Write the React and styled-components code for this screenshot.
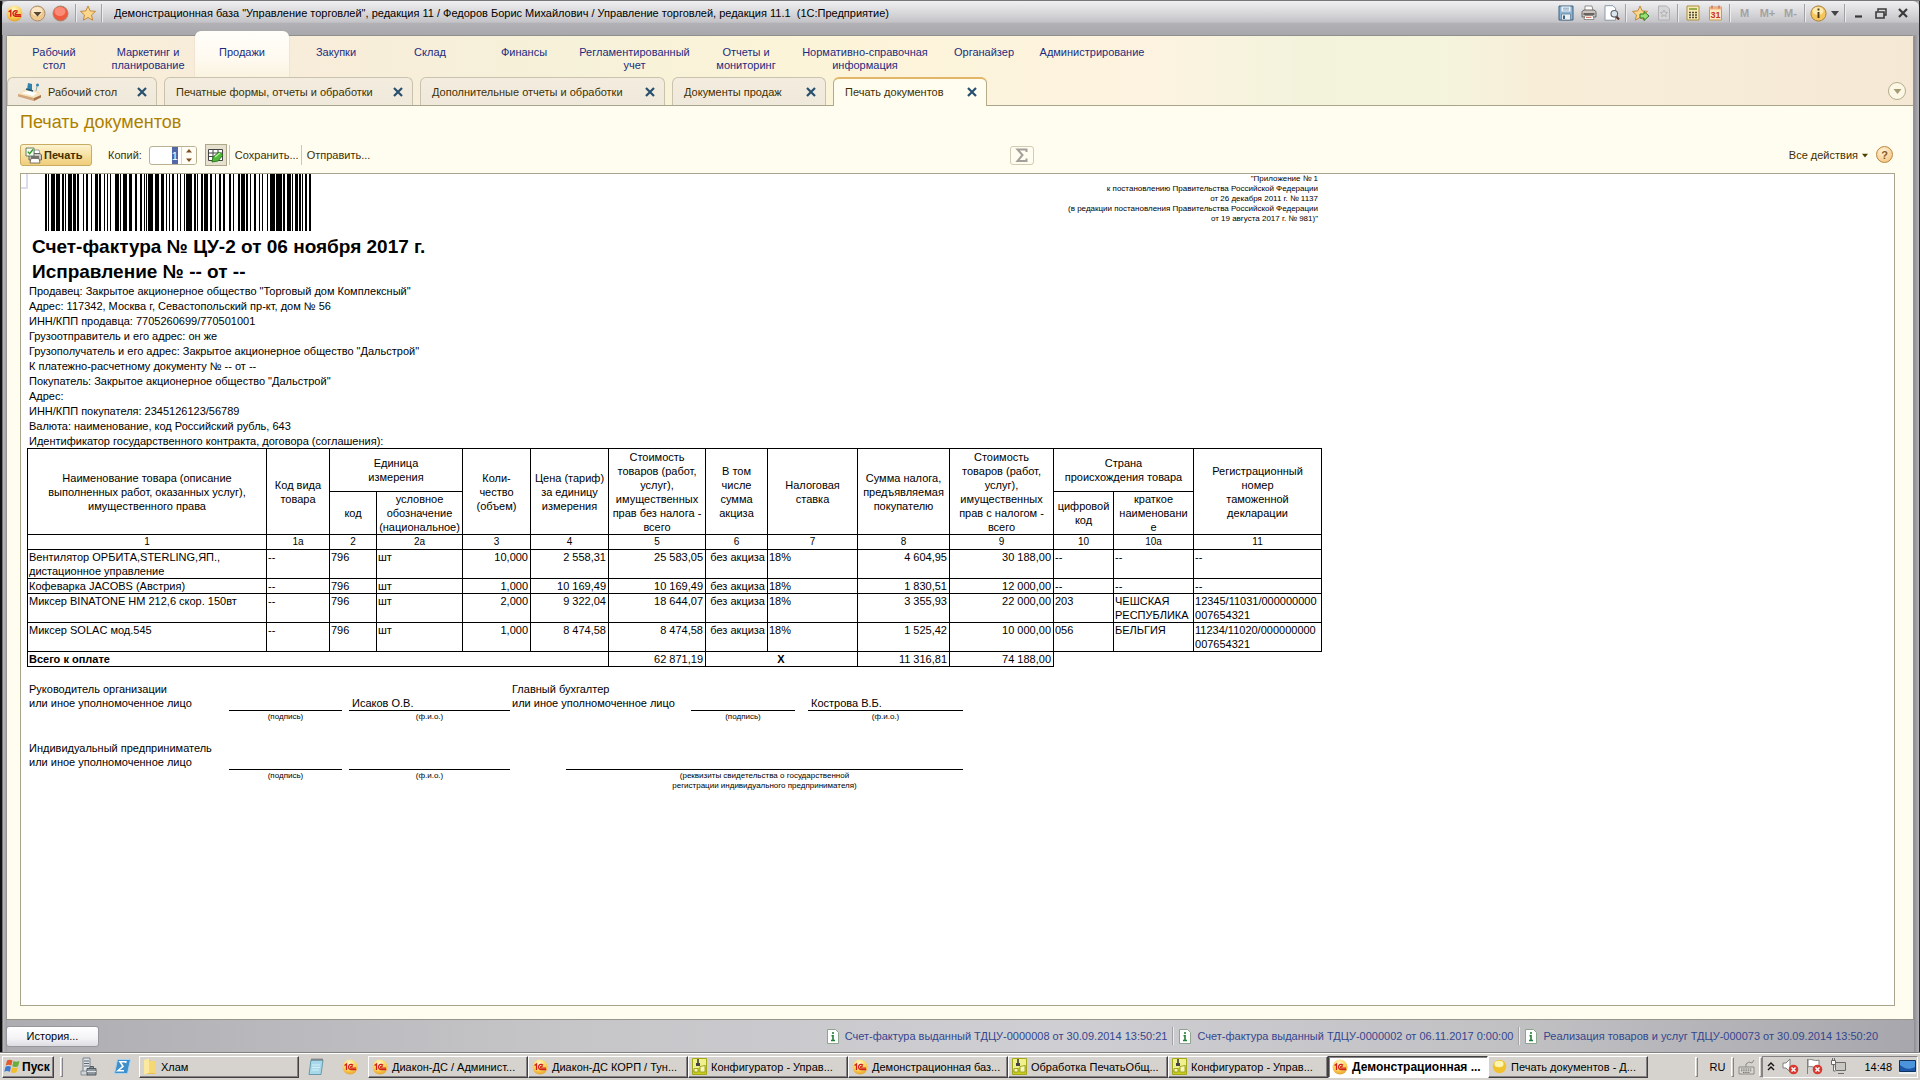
import { Fragment } from 'react';
import styled, { createGlobalStyle, css } from 'styled-components';

const GlobalStyle = createGlobalStyle`
  * {
    box-sizing: border-box;
  }
  body {
    margin: 0;
    font-family: 'Liberation Sans', Arial, sans-serif;
    font-size: 11px;
    line-height: 14px;
    color: #000;
  }
  button, input {
    font: inherit;
    color: inherit;
  }
  button {
    padding: 0;
    border: 0;
    background: none;
  }
  a {
    text-decoration: none;
  }
  svg {
    flex: none;
  }
`;

const Screen = styled.div`
  min-height: 100vh;
  display: flex;
  flex-direction: column;
  background: #d6d3ce;
`;

const AppWindow = styled.div`
  flex: 1;
  display: flex;
  flex-direction: column;
  padding: 0 6px;
  border-top: 1px solid #77777b;
  border-bottom: 1px solid #808080;
  background:
    linear-gradient(90deg, #111 0 2px, #77777b 2px 3px, #b9b9bd 3px, #9d9da2 7px, transparent 7px),
    linear-gradient(270deg, #2b2b2f 0 1px, #b4b4b8 1px, #8d8d94 6px, transparent 6px),
    linear-gradient(90deg, #adadb1, #c6c6c9 30%, #cfced2 55%, #c0c0c3 80%, #a6a6ac);
`;

/* title bar */

const TitleBar = styled.header`
  height: 34px;
  margin: 0 -5px 0 -4px;
  padding: 0 5px 10px 1px;
  display: flex;
  align-items: center;
  border-radius: 6px 6px 0 0;
  background: linear-gradient(#f0f0f2, #d8d8db 35%, #c4c4c8 62%, #b2b2b6 66%, #a8a8ac);
`;

const IconButton = styled.button`
  flex: none;
  width: ${(props) => props.$width || 23}px;
  height: 20px;
  display: flex;
  align-items: center;
  justify-content: center;
  color: ${(props) => props.$color || '#333'};
  font-weight: bold;
`;

const BarLine = styled.span`
  flex: none;
  width: 2px;
  height: 18px;
  margin: 0 ${(props) => props.$gap || 2}px;
  border-left: 1px solid #a2a2a6;
  border-right: 1px solid #ececee;
`;

const TitleText = styled.h1`
  flex: 1;
  margin: 0 8px;
  font-size: 11px;
  font-weight: normal;
  white-space: nowrap;
  overflow: hidden;
`;

/* sections and tabs */

const Workspace = styled.div`
  flex: 1;
  display: flex;
  flex-direction: column;
  background: #fffcf0;
  border: 1px solid #98968c;
  border-top-color: #8f8f8f;
  border-radius: 3px 3px 0 0;
`;

const Band = styled.div`
  border-bottom: 1px solid #a9a58c;
  background: linear-gradient(
    90deg,
    #f9f0d8,
    #f8ecda 12%,
    #f6f1d9 30%,
    #fcf4d8 42%,
    #fdf3e0 60%,
    #f3f3dc 68%,
    #f4f4dc 75%,
    #f8eed8 80%,
    #f5e9d6
  );
`;

const Sections = styled.nav`
  height: 41px;
  display: flex;
`;

const Section = styled.a`
  flex: none;
  width: ${(props) => props.$width || 94}px;
  padding: 10px 4px 0;
  color: #1c2b80;
  text-align: center;
  line-height: 13px;
  white-space: pre-line;
  ${(props) =>
    props.$active &&
    css`
      margin-top: -5px;
      padding-top: 15px;
      border-radius: 6px 6px 0 0;
      background: linear-gradient(#fffefa, #fffaf0 60%, #faf3e0);
      box-shadow: 0 0 1px #a9a58c;
    `}
`;

const Tabs = styled.div`
  height: 28px;
  display: flex;
  gap: 7px;
`;

const Tab = styled.div`
  flex: none;
  width: ${(props) => props.$width}px;
  display: flex;
  align-items: center;
  justify-content: space-between;
  padding: 0 7px 0 ${(props) => (props.$icon ? 9 : 11)}px;
  border: 1px solid #c9c3ae;
  border-bottom: 0;
  border-radius: 6px 6px 0 0;
  background: linear-gradient(#f3ecdf, #efe9dc);
  color: #3f3000;
  ${(props) =>
    props.$active &&
    css`
      margin-bottom: -1px;
      padding-bottom: 2px;
      border-color: #b5ab88;
      border-top: 2px solid #e3b566;
      background: #fffcf0;
    `}
`;

const TabLabel = styled.button`
  display: flex;
  align-items: center;
  gap: 6px;
  white-space: nowrap;
`;

const TabClose = styled.button`
  width: 14px;
  height: 14px;
  display: flex;
  align-items: center;
  justify-content: center;
`;

const CollapseButton = styled.button`
  width: 18px;
  height: 18px;
  margin: 5px 7px 0 auto;
  display: flex;
  align-items: center;
  justify-content: center;
  border: 1px solid #b3ad8a;
  border-radius: 50%;
  background: #fdf8e6;
`;

/* form */

const Form = styled.main`
  flex: 1;
  display: flex;
  flex-direction: column;
  padding: 0 18px 13px 13px;
`;

const FormTitle = styled.h2`
  margin: 0;
  padding: 6px 0 0;
  height: 38px;
  font-size: 18px;
  line-height: 20px;
  font-weight: normal;
  color: #ad8000;
`;

const Toolbar = styled.div`
  height: 29px;
  display: flex;
  align-items: flex-start;
  color: #3f3000;
  line-height: 22px;
`;

const PrintButton = styled.button`
  width: 72px;
  height: 22px;
  display: flex;
  align-items: center;
  gap: 2px;
  padding-left: 4px;
  border: 1px solid #c9ab62;
  border-radius: 3px;
  background: linear-gradient(#fdf3d0, #f6dc98 60%, #efce7c);
  font-weight: bold;
`;

const CopiesLabel = styled.label`
  margin: 0 7px 0 16px;
`;

const Spinner = styled.div`
  width: 48px;
  height: 19px;
  margin: 2px 8px 0 0;
  display: flex;
  border: 1px solid #b9b191;
  border-radius: 3px;
  background: #fff;
  overflow: hidden;
`;

const CopiesInput = styled.input`
  flex: 1;
  min-width: 0;
  padding: 0 3px;
  border: 0;
  outline: 0;
  background: none;
  text-align: right;
  &::selection {
    background: #5068a8;
    color: #fff;
  }
`;

const Steps = styled.button`
  width: 15px;
  display: flex;
  align-items: center;
  justify-content: center;
  border-left: 1px solid #ddd6b8;
  background: #fffdf4;
`;

const ToggleButton = styled.button`
  width: 22px;
  height: 22px;
  display: flex;
  align-items: center;
  justify-content: center;
  border: 1px solid #aea68a;
  background: #e6e0cf;
`;

const ToolLine = styled.span`
  width: 1px;
  height: 20px;
  margin: 1px 5px 0 2px;
  background: #cfc9ac;
`;

const TextButton = styled.button`
  height: 22px;
  display: flex;
  align-items: center;
  gap: 4px;
`;

const Spring = styled.span`
  flex: ${(props) => props.$grow || 1};
`;

const SumButton = styled.button`
  width: 24px;
  height: 19px;
  margin-top: 2px;
  display: flex;
  align-items: center;
  justify-content: center;
  border: 1px solid #d2ccb4;
  border-radius: 3px;
`;

const HelpButton = styled.button`
  width: 17px;
  height: 17px;
  margin: 2px 2px 0 8px;
  border: 1px solid #b98640;
  border-radius: 50%;
  background: radial-gradient(circle at 40% 30%, #fff4dc, #f3bd6c);
  line-height: 14px;
  font-weight: bold;
  color: #8a5a20;
`;

const Sheet = styled.section`
  flex: 1;
  padding: 0 0 20px 6px;
  border: 1px solid #a9a58c;
  background: #fff;
  overflow: hidden;
`;

/* printed document */

const Paper = styled.article`
  position: relative;
  width: 1294px;
  line-height: 14px;
`;

const CellCursor = styled.div`
  position: absolute;
  top: 0;
  left: -6px;
  width: 7px;
  height: 15px;
  border: 2px solid #dcdcec;
  border-left: 0;
  border-top: 0;
`;

const PaperTop = styled.div`
  height: 60px;
  display: flex;
  justify-content: space-between;
  padding: 0 3px 0 18px;
`;

const Decree = styled.p`
  margin: 0;
  font-size: 8px;
  line-height: 10px;
  text-align: right;
  white-space: pre-line;
`;

const DocTitle = styled.h3`
  margin: 0 0 0 5px;
  font-size: 19px;
  line-height: 25px;
`;

const Details = styled.p`
  margin: 0;
  padding: 0 0 0 2px;
  line-height: 15px;
`;

const Invoice = styled.table`
  width: 100%;
  margin-top: -1px;
  table-layout: fixed;
  border-collapse: collapse;
`;

const Row = styled.tr`
  height: ${(props) => props.$height}px;
`;

const Head = styled.th`
  padding: 0;
  border: 1px solid #000;
  font-weight: normal;
  white-space: pre-line;
  font-size: ${(props) => (props.$small ? 10 : 11)}px;
`;

const Cell = styled.td`
  padding: 0 2px 0 1px;
  border: 1px solid #000;
  vertical-align: top;
  white-space: pre-line;
  text-align: ${(props) => props.$align || 'left'};
  font-weight: ${(props) => (props.$bold ? 'bold' : 'normal')};
`;

const SignRow = styled.div`
  display: flex;
  align-items: flex-start;
  padding: ${(props) => props.$top}px 0 0 2px;
`;

const SignLabel = styled.div`
  width: ${(props) => props.$width}px;
  white-space: pre-line;
`;

const SignField = styled.div`
  width: ${(props) => props.$width}px;
  margin-right: ${(props) => props.$gap || 0}px;
  padding-top: 14px;
`;

const SignValue = styled.div`
  height: 15px;
  padding-left: 3px;
  border-bottom: 1px solid #000;
`;

const SignCaption = styled.div`
  padding-top: 1px;
  font-size: 8px;
  line-height: 10px;
  text-align: center;
  white-space: pre-line;
`;

/* status bar */

const StatusBar = styled.footer`
  height: 32px;
  display: flex;
  align-items: center;
  padding: 0 36px 0 0;
`;

const HistoryButton = styled.button`
  width: 93px;
  height: 21px;
  margin-right: auto;
  border: 1px solid #97979c;
  border-radius: 3px;
  background: linear-gradient(#fff, #f3f3f6 60%, #dcdce2);
`;

const StatusLink = styled.a`
  display: flex;
  align-items: center;
  gap: 6px;
  color: #34468f;
`;

/* taskbar */

const Taskbar = styled.footer`
  height: 27px;
  display: flex;
  align-items: center;
  padding: 1px 2px 2px;
  border-top: 1px solid #fff;
  background: #d6d3ce;
`;

const raised = css`
  border: 1px solid;
  border-color: #fff #404040 #404040 #fff;
  box-shadow: inset -1px -1px 0 #848284;
`;

const StartButton = styled.button`
  width: 52px;
  height: 22px;
  display: flex;
  align-items: center;
  gap: 1px;
  padding-left: 1px;
  font-size: 12px;
  font-weight: bold;
  ${raised}
`;

const Grip = styled.span`
  width: 3px;
  height: 20px;
  margin: 0 ${(props) => props.$after}px 0 ${(props) => props.$before}px;
  border: 1px solid;
  border-color: #fff #848284 #848284 #fff;
`;

const TaskList = styled.div`
  flex: 0 1 1280px;
  min-width: 0;
  margin-left: 1px;
  display: flex;
`;

const TaskButton = styled.button`
  flex: 0 1 160px;
  min-width: 0;
  height: 22px;
  display: flex;
  align-items: center;
  gap: 4px;
  padding: 0 3px;
  white-space: nowrap;
  overflow: hidden;
  ${raised}
  ${(props) =>
    props.$active &&
    css`
      background: #fff;
      border-color: #404040 #fff #fff #404040;
      box-shadow: inset 1px 1px 0 #848284;
      font-size: 12px;
      font-weight: bold;
    `}
`;

const QuickButton = styled.button`
  width: 34px;
  height: 22px;
  display: flex;
  align-items: center;
  justify-content: center;
`;

const Tray = styled.div`
  height: 22px;
  display: flex;
  align-items: center;
  gap: 7px;
  padding: 0 1px 0 4px;
  border: 1px solid;
  border-color: #848284 #fff #fff #848284;
  font-size: 11px;
`;

const LangButton = styled.button`
  width: 28px;
  font-size: 11px;
`;

const Clock = styled.time`
  padding-left: 10px;
`;

/* icons */

const OneCIcon = ({ size = 16 }) => (
  <svg width={size} height={size} viewBox="0 0 16 16">
    <defs>
      <radialGradient id="onec" cx="45%" cy="25%" r="80%">
        <stop offset="0" stopColor="#fff6c8" />
        <stop offset=".6" stopColor="#fbcf52" />
        <stop offset="1" stopColor="#e39a2c" />
      </radialGradient>
    </defs>
    <circle cx="8" cy="8" r="7.5" fill="url(#onec)" />
    <path d="M2.500 6.500 4.500 5v6M11 6.200A2.600 2.600 0 1 0 9 10.600h5.200M10.600 7.600A1.100 1.100 0 1 0 9 9.100h5" fill="none" stroke="#d3201c" strokeWidth="1.300" />
  </svg>
);

const BallIcon = ({ light, dark, arrow }) => (
  <svg width="17" height="17" viewBox="0 0 17 17">
    <circle cx="8.5" cy="8.5" r="7.5" fill={dark} stroke="#a98a6c" />
    <ellipse cx="8" cy="6.5" rx="5.5" ry="4.6" fill={light} opacity=".75" />
    {arrow && <path d="M4.5 7h8l-4 4.5z" fill="#5a4630" />}
  </svg>
);

const StarIcon = ({ arrow }) => (
  <svg width="18" height="17" viewBox="0 0 18 17">
    <path d="m8 1 2.2 4.9 5.3.5-4 3.6 1.2 5.2L8 12.5l-4.7 2.7L4.5 10l-4-3.6 5.3-.5z" fill="#fbd78c" stroke="#c58a3c" />
    {arrow && <path d="M8 9h4V6.5l5 4.5-5 4.5V13H8z" fill="#9be070" stroke="#2c7a22" />}
  </svg>
);

const SaveIcon = () => (
  <svg width="16" height="16" viewBox="0 0 16 16">
    <path d="M1 1h14v14H1z" fill="#8db4d2" stroke="#3f617c" />
    <path d="M3.5 1.5h9v5h-9z" fill="#eef5fa" />
    <path d="M5 3.2h6M5 5h6" stroke="#8aa3b6" />
    <path d="M3.5 9h9v6h-9z" fill="#e9eff3" stroke="#56748b" strokeWidth=".7" />
    <path d="M5 10.5h2V14H5z" fill="#3f617c" />
  </svg>
);

const PrinterIcon = () => (
  <svg width="16" height="16" viewBox="0 0 16 16">
    <path d="M4 1h7l1 5H4z" fill="#fff" stroke="#777" strokeWidth=".8" />
    <path d="M1 6.5 3 5h10l2 1.5V12H1z" fill="#c9c5c2" stroke="#655e5a" strokeWidth=".9" />
    <path d="M2.5 8h11v2h-11z" fill="#6b625e" />
    <path d="M4 10.5h8l1 4H3z" fill="#fff" stroke="#777" strokeWidth=".8" />
    <path d="M5 12.3h5.5" stroke="#d35a3c" />
  </svg>
);

const PreviewIcon = () => (
  <svg width="16" height="16" viewBox="0 0 16 16">
    <path d="M1 .7h8l2.5 2.5v12H1z" fill="#fff" stroke="#7d90a3" strokeWidth=".9" />
    <path d="m12.3 11.5 2.7 3" stroke="#5e3425" strokeWidth="2.2" />
    <circle cx="10.3" cy="8.8" r="3.3" fill="#dbe7ee" stroke="#59636b" strokeWidth="1.1" />
  </svg>
);

const FavoritesIcon = () => (
  <svg width="14" height="16" viewBox="0 0 14 16">
    <path d="M1.5 1h8l3 3v11h-11z" fill="#d6d6d9" stroke="#b0b0b4" />
    <path d="m7 5 1.1 2.3 2.4.2-1.8 1.7.5 2.5L7 10.4l-2.2 1.3.5-2.5-1.8-1.7 2.4-.2z" fill="none" stroke="#aaa" strokeWidth=".8" />
  </svg>
);

const CalcIcon = () => (
  <svg width="14" height="16" viewBox="0 0 14 16">
    <path d="M1 1h12v14H1z" fill="#f8e9b4" stroke="#a98e3e" />
    <path d="M3 3h8v2H3z" fill="#9aae4c" />
    <path d="M3 7.5h8M3 10h8M3 12.5h8" stroke="#4d4a3a" strokeWidth="1.5" strokeDasharray="2 1" />
  </svg>
);

const CalendarIcon = () => (
  <svg width="15" height="16" viewBox="0 0 15 16">
    <path d="M1.5 2h12v13h-12z" fill="#fdeac4" stroke="#c79a55" />
    <path d="M1.5 2h12v2.5h-12z" fill="#f3b27c" />
    <path d="M4 .5v3M11 .5v3" stroke="#b56" />
    <text x="7.5" y="13" textAnchor="middle" fontSize="9" fontWeight="bold" fill="#c7381f">31</text>
  </svg>
);

const InfoBall = () => (
  <svg width="17" height="17" viewBox="0 0 17 17">
    <circle cx="8.5" cy="8.5" r="7.6" fill="#f6c65c" stroke="#a9803c" />
    <ellipse cx="8" cy="6" rx="5.5" ry="4" fill="#fff2c4" opacity=".8" />
    <path d="M8.5 3.6v2M8.5 7v6" stroke="#4d3a1c" strokeWidth="1.9" />
  </svg>
);

const CaretIcon = ({ color = '#4c4300', width = 7 }) => (
  <svg width={width} height="5" viewBox="0 0 8 5">
    <path d="M0 0h8L4 5z" fill={color} />
  </svg>
);

const CrossIcon = ({ color = '#28506e' }) => (
  <svg width="10" height="10" viewBox="0 0 10 10">
    <path d="m1 1 8 8M9 1 1 9" stroke={color} strokeWidth="2.2" />
  </svg>
);

const MinimizeIcon = () => (
  <svg width="12" height="12" viewBox="0 0 12 12">
    <path d="M2 9.5h7" stroke="#3a3a3a" strokeWidth="2.2" />
  </svg>
);

const RestoreIcon = () => (
  <svg width="12" height="11" viewBox="0 0 12 11">
    <path d="M3 3.5V1h8v6H9" fill="none" stroke="#3a3a3a" strokeWidth="1.5" />
    <path d="M1 4h8v6H1z" fill="none" stroke="#3a3a3a" strokeWidth="1.6" />
  </svg>
);

const DeskIcon = () => (
  <svg width="25" height="20" viewBox="0 0 25 20">
    <path d="m1 12 7-5 14 2 2 5-7 4z" fill="#f6e3bd" />
    <path d="m1 12 16 4v3L1 14.500z" fill="#d3a57c" />
    <path d="m17 16 7-3v2.500l-7 3.500z" fill="#a8754c" />
    <path d="m4 11 7-2 9 2-4 3z" fill="#fff" />
    <path d="m11 1 4 1v7l-5-1z" fill="#2f82ac" />
    <path d="m9 7 7 2" stroke="#1d5674" strokeWidth="1.500" />
    <circle cx="20.500" cy="3" r="1.500" fill="#2f82ac" />
    <path d="m20 4-1 5" stroke="#8aa" />
  </svg>
);

const PrintFormIcon = () => (
  <svg width="17" height="17" viewBox="0 0 17 17">
    <path d="M9 3h5l1 4H9z" fill="#fff" stroke="#888" strokeWidth=".8" />
    <path d="M4 8 6 6.500h9l1.500 1.500v5H4z" fill="#c8c4c0" stroke="#5f5954" strokeWidth=".9" />
    <path d="M6 11.500h8l1 4.500H5z" fill="#fff" stroke="#5f5954" strokeWidth=".8" />
    <path d="M6 10h8" stroke="#555" strokeWidth="1.500" />
    <path d="M1 1h8v8H1z" fill="#f5fbef" stroke="#57735b" strokeWidth=".9" />
    <path d="m2.800 4.600 1.800 2L8 2.500" fill="none" stroke="#2c962c" strokeWidth="1.400" />
  </svg>
);

const EditTableIcon = () => (
  <svg width="17" height="17" viewBox="0 0 17 17">
    <path d="M1.500 2.500h14v11h-14z" fill="#fff" stroke="#444" />
    <path d="M1.500 6h14M1.500 9.500h14M6 2.500v11M11 2.500v11" stroke="#444" />
    <path d="m5 15 1-5 6-5 4 3-5 6z" fill="#52b83c" stroke="#25771a" strokeWidth=".9" />
    <path d="m8 10 5-4" stroke="#b5ec98" strokeWidth="1.400" />
  </svg>
);

const StepsIcon = () => (
  <svg width="6" height="13" viewBox="0 0 6 13">
    <path d="M0 3.500 3 0l3 3.500zM0 9.500h6L3 13z" fill="#7d4f24" />
  </svg>
);

const SigmaIcon = () => (
  <svg width="13" height="15" viewBox="0 0 13 15">
    <path d="M11.500 4V1.500h-9L7.500 7l-5 6h9V10.500" fill="none" stroke="#a3a09a" strokeWidth="2" />
  </svg>
);

const NoteIcon = () => (
  <svg width="12" height="15" viewBox="0 0 12 15">
    <path d="M.5.5h8l3 3v11H.5z" fill="#fff" stroke="#8da58f" />
    <path d="M6 3v2M4.500 6.800H6v4.500M4 11.500h4" fill="none" stroke="#22803a" strokeWidth="1.600" />
  </svg>
);

const WindowsIcon = () => (
  <svg width="17" height="17" viewBox="0 0 17 17">
    <path d="M3 2.500c2-1 3.500-1 5.500 0L7.300 7.600c-2-1-3.600-1-5.500 0z" fill="#e2592b" />
    <path d="M9.500 3c2 1 3.700 1 6 0l-1.400 5.200c-2 1-3.800 1-5.800 0z" fill="#69ad3a" />
    <path d="M1.500 8.800c2-1 3.600-1 5.500 0l-1.200 5c-2-1-3.600-1-5.500 0z" fill="#3d79cf" />
    <path d="M8 9.200c2 1 3.700 1 5.800 0l-1.300 5.100c-2 1-3.800 1-5.800 0z" fill="#f3bd2c" />
  </svg>
);

const ServerIcon = () => (
  <svg width="17" height="19" viewBox="0 0 17 19">
    <path d="M3 1h7v15H3z" fill="#dfe4e8" stroke="#76828c" />
    <path d="M4 4h5M4 6.500h5M4 9h5" stroke="#5d6973" />
    <path d="M1 14h7v4H1z" fill="#cfd4d8" stroke="#76828c" strokeWidth=".8" />
    <path d="M7 11.500h9V18H7zM10 11.500v-2h3.500v2" fill="#8f999f" stroke="#525c63" />
    <path d="M7 14.500h9" stroke="#dfe4e8" />
  </svg>
);

const ShellIcon = () => (
  <svg width="17" height="17" viewBox="0 0 17 17">
    <path d="M3.500 1.500h13L13.500 15.500H.5z" fill="#3f8fcb" stroke="#a6d2ef" />
    <path d="m11.500 5 .3-1.200H6L9 8.300l-5 4.400h6" fill="none" stroke="#fff" strokeWidth="1.600" />
  </svg>
);

const FolderIcon = () => (
  <svg width="14" height="17" viewBox="0 0 14 17">
    <path d="M1 2h5l2 1h4v13H1z" fill="#e6bf4e" />
    <path d="m1 2 5-1.500V15l-5 1.500z" fill="#fbe9a0" />
    <path d="M6 3h6v12H6z" fill="#f5d775" />
  </svg>
);

const NotepadIcon = () => (
  <svg width="16" height="18" viewBox="0 0 16 18">
    <path d="M3 2h12l-2 14.500H1z" fill="#a7d9ea" stroke="#5b93a6" strokeWidth=".9" />
    <path d="M4 7h8M4 9.500h8M3.500 12H11" stroke="#d6f0f7" />
    <path d="M3.500 1.500h11" stroke="#555" strokeWidth="2" strokeDasharray="1 1" />
  </svg>
);

const ConfigIcon = () => (
  <svg width="15" height="17" viewBox="0 0 15 17">
    <path d="M.5.5h14v16H.5z" fill="#c9cd1f" stroke="#a3a81a" />
    <path d="M1 1h13v6L1 12z" fill="#f0f08c" />
    <path d="M6 1v4" stroke="#333" strokeWidth="1.500" />
    <path d="M4 5h4v3H4z" fill="#444" />
    <path d="M2 14v-3.500h4V14zM8 14V8.500l5-1V14z" fill="#f6f7b4" stroke="#8f9413" strokeWidth=".8" />
  </svg>
);

const YellowBallIcon = () => (
  <svg width="15" height="15" viewBox="0 0 15 15">
    <circle cx="7.500" cy="7.500" r="6.800" fill="#f2c22e" />
    <ellipse cx="7" cy="5" rx="4.500" ry="3.300" fill="#fff6b0" />
  </svg>
);

const KeyboardIcon = () => (
  <svg width="17" height="16" viewBox="0 0 17 16">
    <path d="M1 8h15v7H1z" fill="#dad8d2" stroke="#8b8983" />
    <path d="M3 10h11M3 11.800h11M5 13.500h7" stroke="#77756f" strokeDasharray="1.500 .7" />
    <path d="M8 8V5l3-2 3 1 2-3" fill="none" stroke="#8b8983" />
  </svg>
);

const ChevronsIcon = () => (
  <svg width="8" height="9" viewBox="0 0 8 9">
    <path d="m1 4 3-3 3 3M1 8l3-3 3 3" fill="none" stroke="#111" strokeWidth="1.400" />
  </svg>
);

const SoundIcon = () => (
  <svg width="17" height="17" viewBox="0 0 17 17">
    <path d="M1 5h3l4-4v13l-4-4H1z" fill="#fff" stroke="#808080" />
    <circle cx="11.500" cy="11.500" r="4.800" fill="#d93a30" />
    <path d="m9.500 9.500 4 4M13.500 9.500l-4 4" stroke="#fff" strokeWidth="1.500" />
  </svg>
);

const FlagIcon = () => (
  <svg width="17" height="17" viewBox="0 0 17 17">
    <path d="M1.500 1v15M2 2c4-2 6 2 11 0v7c-5 2-7-2-11 0z" fill="#fff" stroke="#808080" />
    <circle cx="11.500" cy="11.500" r="4.800" fill="#d93a30" />
    <path d="m9.500 9.500 4 4M13.500 9.500l-4 4" stroke="#fff" strokeWidth="1.500" />
  </svg>
);

const NetworkIcon = () => (
  <svg width="17" height="17" viewBox="0 0 17 17">
    <path d="M5.500 4.500h10v8h-10zM8 15.500h6" fill="#c9c7c2" stroke="#6b6b6b" />
    <path d="M1.500 2.500h4v4h-4zM2.500 0v2.500M4.500 0v2.500M3.500 6.500V13h2" fill="#fff" stroke="#6b6b6b" />
  </svg>
);

const DesktopIcon = () => (
  <svg width="17" height="14" viewBox="0 0 17 14">
    <path d="M.5.5h16v11H.5z" fill="#1d58a8" stroke="#0f315e" />
    <path d="M1 11V5c5 4 9 5 15 2V1H1z" fill="#4c94dc" />
    <path d="M0 13h17" stroke="#e9eef3" strokeWidth="2" />
  </svg>
);

// bar and space widths in turn, starting with a bar
const barcodeWidths = [
  2, 1, 1, 2, 4, 1, 4, 2, 2, 1, 1, 2, 4, 1, 3, 1, 1, 1, 1, 4, 1, 2, 2, 3, 1, 3, 3, 1, 2, 3, 1, 2,
  1, 2, 1, 4, 4, 1, 1, 2, 4, 2, 3, 3, 2, 3, 2, 2, 1, 2, 1, 1, 5, 2, 4, 2, 3, 2, 1, 2, 1, 2, 2, 3,
  1, 2, 1, 3, 1, 1, 6, 2, 2, 1, 1, 3, 2, 1, 4, 2, 3, 3, 1, 3, 2, 2, 2, 4, 2, 2, 1, 4, 2, 1, 4, 1,
  2, 2, 1, 3, 2, 3, 1, 2, 1, 4, 1, 2, 5, 1, 2, 1, 4, 1, 2, 2, 4, 1, 1, 2, 3, 1, 2, 1, 1, 2, 2, 2, 2,
];

const Barcode = () => {
  let x = 0;
  const bars = [];
  barcodeWidths.forEach((width, i) => {
    if (i % 2 === 0) bars.push(<rect key={i} x={x} y="0" width={width} height="57" />);
    x += width;
  });
  return (
    <svg width="266" height="57" viewBox={`0 0 ${x} 57`} preserveAspectRatio="none" shapeRendering="crispEdges">
      {bars}
    </svg>
  );
};

const sections = [
  { label: 'Рабочий\nстол' },
  { label: 'Маркетинг и\nпланирование' },
  { label: 'Продажи', active: true },
  { label: 'Закупки' },
  { label: 'Склад' },
  { label: 'Финансы' },
  { label: 'Регламентированный\nучет', width: 127 },
  { label: 'Отчеты и\nмониторинг', width: 96 },
  { label: 'Нормативно-справочная\nинформация', width: 142 },
  { label: 'Органайзер', width: 96 },
  { label: 'Администрирование', width: 120 },
];

const tabs = [
  { label: 'Рабочий стол', width: 150, icon: <DeskIcon /> },
  { label: 'Печатные формы, отчеты и обработки', width: 249 },
  { label: 'Дополнительные отчеты и обработки', width: 245 },
  { label: 'Документы продаж', width: 154 },
  { label: 'Печать документов', width: 154, active: true },
];

const details = [
  'Продавец: Закрытое акционерное общество "Торговый дом Комплексный"',
  'Адрес: 117342, Москва г, Севастопольский пр-кт, дом № 56',
  'ИНН/КПП продавца: 7705260699/770501001',
  'Грузоотправитель и его адрес: он же',
  'Грузополучатель и его адрес: Закрытое акционерное общество "Дальстрой"',
  'К платежно-расчетному документу № -- от --',
  'Покупатель: Закрытое акционерное общество "Дальстрой"',
  'Адрес:',
  'ИНН/КПП покупателя: 2345126123/56789',
  'Валюта: наименование, код Российский рубль, 643',
  'Идентификатор государственного контракта, договора (соглашения):',
];

const columns = [
  { width: 239, number: '1' },
  { width: 63, number: '1а' },
  { width: 47, number: '2' },
  { width: 86, number: '2а' },
  { width: 68, number: '3', align: 'right' },
  { width: 78, number: '4', align: 'right' },
  { width: 97, number: '5', align: 'right' },
  { width: 62, number: '6', align: 'right' },
  { width: 90, number: '7' },
  { width: 92, number: '8', align: 'right' },
  { width: 104, number: '9', align: 'right' },
  { width: 60, number: '10' },
  { width: 80, number: '10а' },
  { width: 128, number: '11' },
];

const goods = [
  {
    height: 29,
    cells: ['Вентилятор ОРБИТА,STERLING,ЯП.,\nдистационное управление', '--', '796', 'шт', '10,000', '2 558,31', '25 583,05', 'без акциза', '18%', '4 604,95', '30 188,00', '--', '--', '--'],
  },
  {
    height: 15,
    cells: ['Кофеварка JACOBS (Австрия)', '--', '796', 'шт', '1,000', '10 169,49', '10 169,49', 'без акциза', '18%', '1 830,51', '12 000,00', '--', '--', '--'],
  },
  {
    height: 29,
    cells: ['Миксер BINATONE HM 212,6 скор. 150вт', '--', '796', 'шт', '2,000', '9 322,04', '18 644,07', 'без акциза', '18%', '3 355,93', '22 000,00', '203', 'ЧЕШСКАЯ\nРЕСПУБЛИКА', '12345/11031/000000000\n007654321'],
  },
  {
    height: 29,
    cells: ['Миксер SOLAC мод.545', '--', '796', 'шт', '1,000', '8 474,58', '8 474,58', 'без акциза', '18%', '1 525,42', '10 000,00', '056', 'БЕЛЬГИЯ', '11234/11020/000000000\n007654321'],
  },
];

const messages = [
  'Счет-фактура выданный ТДЦУ-0000008 от 30.09.2014 13:50:21',
  'Счет-фактура выданный ТДЦУ-0000002 от 06.11.2017 0:00:00',
  'Реализация товаров и услуг ТДЦУ-000073 от 30.09.2014 13:50:20',
];

const tasks = [
  { label: 'Диакон-ДС / Админист...', icon: <OneCIcon /> },
  { label: 'Диакон-ДС КОРП / Тун...', icon: <OneCIcon /> },
  { label: 'Конфигуратор - Управ...', icon: <ConfigIcon /> },
  { label: 'Демонстрационная баз...', icon: <OneCIcon /> },
  { label: 'Обработка ПечатьОбщ...', icon: <ConfigIcon /> },
  { label: 'Конфигуратор - Управ...', icon: <ConfigIcon /> },
  { label: 'Демонстрационная ...', icon: <OneCIcon />, active: true },
  { label: 'Печать документов - Д...', icon: <YellowBallIcon /> },
];

const Signature = ({ width, gap, value, caption }) => (
  <SignField $width={width} $gap={gap}>
    <SignValue>{value}</SignValue>
    <SignCaption>{caption}</SignCaption>
  </SignField>
);

const InvoiceTable = () => (
  <Invoice>
    <colgroup>
      {columns.map((column) => (
        <col key={column.number} width={column.width} />
      ))}
    </colgroup>
    <thead>
      <Row $height={43}>
        <Head rowSpan={2}>{'Наименование товара (описание\nвыполненных работ, оказанных услуг),\nимущественного права'}</Head>
        <Head rowSpan={2}>{'Код вида\nтовара'}</Head>
        <Head colSpan={2}>{'Единица\nизмерения'}</Head>
        <Head rowSpan={2}>{'Коли-\nчество\n(объем)'}</Head>
        <Head rowSpan={2}>{'Цена (тариф)\nза единицу\nизмерения'}</Head>
        <Head rowSpan={2}>{'Стоимость\nтоваров (работ,\nуслуг),\nимущественных\nправ без налога -\nвсего'}</Head>
        <Head rowSpan={2}>{'В том\nчисле\nсумма\nакциза'}</Head>
        <Head rowSpan={2}>{'Налоговая\nставка'}</Head>
        <Head rowSpan={2}>{'Сумма налога,\nпредъявляемая\nпокупателю'}</Head>
        <Head rowSpan={2}>{'Стоимость\nтоваров (работ,\nуслуг),\nимущественных\nправ с налогом -\nвсего'}</Head>
        <Head colSpan={2}>{'Страна\nпроисхождения товара'}</Head>
        <Head rowSpan={2}>{'Регистрационный\nномер\nтаможенной\nдекларации'}</Head>
      </Row>
      <Row $height={43}>
        <Head>код</Head>
        <Head>{'условное\nобозначение\n(национальное)'}</Head>
        <Head>{'цифровой\nкод'}</Head>
        <Head>{'краткое\nнаименовани\nе'}</Head>
      </Row>
      <Row $height={15}>
        {columns.map((column) => (
          <Head key={column.number} $small>
            {column.number}
          </Head>
        ))}
      </Row>
    </thead>
    <tbody>
      {goods.map((row) => (
        <Row key={row.cells[0]} $height={row.height}>
          {row.cells.map((cell, i) => (
            <Cell key={columns[i].number} $align={columns[i].align}>
              {cell}
            </Cell>
          ))}
        </Row>
      ))}
      <Row $height={15}>
        <Cell colSpan={6} $bold>
          Всего к оплате
        </Cell>
        <Cell $align="right">62 871,19</Cell>
        <Cell colSpan={2} $align="center" $bold>
          X
        </Cell>
        <Cell $align="right">11 316,81</Cell>
        <Cell $align="right">74 188,00</Cell>
      </Row>
    </tbody>
  </Invoice>
);

const InvoicePaper = () => (
  <Paper>
    <CellCursor />
    <PaperTop>
      <Barcode />
      <Decree>
        {'"Приложение № 1\nк постановлению Правительства Российской Федерации\nот 26 декабря 2011 г. № 1137\n(в редакции постановления Правительства Российской Федерации\nот 19 августа 2017 г. № 981)"'}
      </Decree>
    </PaperTop>
    <DocTitle>
      Счет-фактура № ЦУ-2 от 06 ноября 2017 г.
      <br />
      Исправление № -- от --
    </DocTitle>
    {details.map((line, i) => (
      <Details key={i}>{line}</Details>
    ))}
    <InvoiceTable />
    <SignRow $top={15}>
      <SignLabel $width={200}>{'Руководитель организации\nили иное уполномоченное лицо'}</SignLabel>
      <Signature width={113} gap={7} caption="(подпись)" />
      <Signature width={161} gap={2} value="Исаков О.В." caption="(ф.и.о.)" />
      <SignLabel $width={179}>{'Главный бухгалтер\nили иное уполномоченное лицо'}</SignLabel>
      <Signature width={104} gap={13} caption="(подпись)" />
      <Signature width={155} value="Кострова В.Б." caption="(ф.и.о.)" />
    </SignRow>
    <SignRow $top={19}>
      <SignLabel $width={200}>{'Индивидуальный предприниматель\nили иное уполномоченное лицо'}</SignLabel>
      <Signature width={113} gap={7} caption="(подпись)" />
      <Signature width={161} gap={56} caption="(ф.и.о.)" />
      <Signature
        width={397}
        caption={'(реквизиты свидетельства о государственной\nрегистрации индивидуального предпринимателя)'}
      />
    </SignRow>
  </Paper>
);

const App = () => (
  <Screen>
    <GlobalStyle />
    <AppWindow>
      <TitleBar>
        <IconButton aria-label="Меню"><OneCIcon size={17} /></IconButton>
        <IconButton aria-label="Главное меню"><BallIcon light="#fdf0d8" dark="#eec88c" arrow /></IconButton>
        <IconButton aria-label="Стоп"><BallIcon light="#ff9c88" dark="#ee5a40" /></IconButton>
        <BarLine $gap={3} />
        <IconButton $width={18} aria-label="Избранное"><StarIcon /></IconButton>
        <BarLine $gap={3} />
        <TitleText>
          Демонстрационная база "Управление торговлей", редакция 11 / Федоров Борис Михайлович / Управление торговлей,
          редакция 11.1&nbsp; (1С:Предприятие)
        </TitleText>
        <IconButton aria-label="Сохранить"><SaveIcon /></IconButton>
        <IconButton aria-label="Печать"><PrinterIcon /></IconButton>
        <IconButton aria-label="Просмотр"><PreviewIcon /></IconButton>
        <BarLine />
        <IconButton aria-label="В избранное"><StarIcon arrow /></IconButton>
        <IconButton aria-label="Ссылка"><FavoritesIcon /></IconButton>
        <BarLine />
        <IconButton aria-label="Калькулятор"><CalcIcon /></IconButton>
        <IconButton aria-label="Календарь"><CalendarIcon /></IconButton>
        <BarLine />
        <IconButton $color="#a5a1a1">M</IconButton>
        <IconButton $color="#a5a1a1">M+</IconButton>
        <IconButton $color="#a5a1a1">M-</IconButton>
        <BarLine />
        <IconButton $width={20} aria-label="Справка"><InfoBall /></IconButton>
        <IconButton $width={14} aria-label="Еще"><CaretIcon color="#444" width={8} /></IconButton>
        <BarLine />
        <IconButton $width={22} aria-label="Свернуть"><MinimizeIcon /></IconButton>
        <IconButton $width={22} aria-label="Восстановить"><RestoreIcon /></IconButton>
        <IconButton $width={22} aria-label="Закрыть"><CrossIcon color="#3a3a3a" /></IconButton>
      </TitleBar>

      <Workspace>
        <Band>
          <Sections>
            {sections.map((section) => (
              <Section key={section.label} href="#" $width={section.width} $active={section.active}>
                {section.label}
              </Section>
            ))}
          </Sections>
          <Tabs>
            {tabs.map((tab) => (
              <Tab key={tab.label} $width={tab.width} $active={tab.active} $icon={!!tab.icon}>
                <TabLabel>
                  {tab.icon}
                  {tab.label}
                </TabLabel>
                <TabClose aria-label="Закрыть">
                  <CrossIcon />
                </TabClose>
              </Tab>
            ))}
            <CollapseButton aria-label="Список окон">
              <CaretIcon color="#a39c74" width={9} />
            </CollapseButton>
          </Tabs>
        </Band>

        <Form>
          <FormTitle>Печать документов</FormTitle>
          <Toolbar>
            <PrintButton>
              <PrintFormIcon />
              Печать
            </PrintButton>
            <CopiesLabel htmlFor="copies">Копий:</CopiesLabel>
            <Spinner>
              <CopiesInput id="copies" defaultValue="1" autoFocus onFocus={(e) => e.target.select()} />
              <Steps aria-label="Изменить">
                <StepsIcon />
              </Steps>
            </Spinner>
            <ToggleButton aria-label="Редактирование">
              <EditTableIcon />
            </ToggleButton>
            <ToolLine />
            <TextButton>Сохранить...</TextButton>
            <ToolLine />
            <TextButton>Отправить...</TextButton>
            <Spring $grow={11} />
            <SumButton aria-label="Сумма">
              <SigmaIcon />
            </SumButton>
            <Spring $grow={13} />
            <TextButton>
              Все действия
              <CaretIcon width={6} />
            </TextButton>
            <HelpButton>?</HelpButton>
          </Toolbar>
          <Sheet>
            <InvoicePaper />
          </Sheet>
        </Form>
      </Workspace>

      <StatusBar>
        <HistoryButton>История...</HistoryButton>
        {messages.map((message, i) => (
          <Fragment key={message}>
            {i > 0 && <BarLine $gap={5} />}
            <StatusLink href="#">
              <NoteIcon />
              {message}
            </StatusLink>
          </Fragment>
        ))}
      </StatusBar>
    </AppWindow>

    <Taskbar>
      <StartButton>
        <WindowsIcon />
        Пуск
      </StartButton>
      <Grip $before={6} $after={8} />
      <QuickButton aria-label="Диспетчер сервера"><ServerIcon /></QuickButton>
      <QuickButton aria-label="PowerShell"><ShellIcon /></QuickButton>
      <TaskButton>
        <FolderIcon />
        Хлам
      </TaskButton>
      <QuickButton aria-label="Блокнот"><NotepadIcon /></QuickButton>
      <QuickButton aria-label="1С"><OneCIcon /></QuickButton>
      <TaskList>
        {tasks.map((task, i) => (
          <TaskButton key={i} $active={task.active}>
            {task.icon}
            {task.label}
          </TaskButton>
        ))}
      </TaskList>
      <Spring />
      <Grip $before={0} $after={5} />
      <LangButton>RU</LangButton>
      <Grip $before={0} $after={4} />
      <KeyboardIcon />
      <Grip $before={4} $after={0} />
      <Tray>
        <ChevronsIcon />
        <SoundIcon />
        <FlagIcon />
        <NetworkIcon />
        <Clock>14:48</Clock>
        <DesktopIcon />
      </Tray>
    </Taskbar>
  </Screen>
);

export default App;
